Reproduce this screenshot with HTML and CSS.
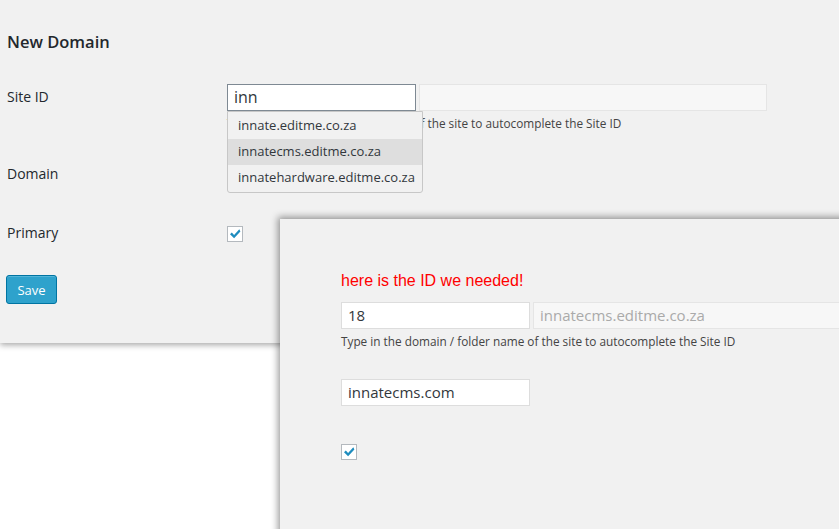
FILE: index.html
```html
<!DOCTYPE html>
<html lang="en">
<head>
    <meta charset="UTF-8">
    <meta name="viewport" content="width=device-width, initial-scale=1.0">
    <title>New Domain</title>
    <link rel="stylesheet" href="styles.css">
</head>
<body>
    <div class="window">
        <h3 class="title">New Domain</h3>
        <div class="form">
            <label class="label">Site ID</label>
            <div class="field">
                <div class="pair">
                    <div class="input focused">inn</div>
                    <div class="input disabled"></div>
                </div>
                <p class="description">Type in the domain / folder name of the site to autocomplete the Site ID</p>
                <ul class="suggest">
                    <li>innate.editme.co.za</li>
                    <li class="active">innatecms.editme.co.za</li>
                    <li>innatehardware.editme.co.za</li>
                </ul>
            </div>

            <label class="label">Domain</label>
            <div class="field short"></div>

            <label class="label">Primary</label>
            <div class="field last">
                <span class="checkbox">
                    <svg viewBox="0 0 16 16" width="16" height="16"><path d="M3 8.2l1.8-1.7 2.3 2.4 5.2-5.6 1.1 2.1-6.3 6.9z" fill="#1e8cbe"/></svg>
                </span>
            </div>
        </div>
        <button class="save">Save</button>
    </div>

    <div class="panel">
        <p class="note">here is the ID we needed!</p>
        <div class="pair">
            <div class="input">18</div>
            <div class="input disabled wide">innatecms.editme.co.za</div>
        </div>
        <p class="description">Type in the domain / folder name of the site to autocomplete the Site ID</p>
        <div class="input domain-input">innatecms.com</div>
        <span class="checkbox panel-check">
            <svg viewBox="0 0 16 16" width="16" height="16"><path d="M3 8.2l1.8-1.7 2.3 2.4 5.2-5.6 1.1 2.1-6.3 6.9z" fill="#1e8cbe"/></svg>
        </span>
    </div>
</body>
</html>
```

FILE: styles.css
```css
body {
    margin: 0;
    height: 529px;
    overflow: hidden;
    background-color: #fff;
    font-family: "Open Sans", sans-serif;
    color: #23282d;
}
.window {
    height: 343px;
    padding: 0 0 0 7px;
    box-sizing: border-box;
    background-color: #f1f1f1;
    box-shadow: 0 2px 6px rgba(0, 0, 0, 0.35);
    overflow: hidden;
}
.title {
    margin: 0;
    padding-top: 31px;
    font-size: 16.5px;
    font-weight: 600;
    line-height: 22px;
}
.form {
    display: grid;
    grid-template-columns: 220px 1fr;
    margin-top: 31px;
}
.label {
    font-size: 14px;
    line-height: 20px;
    padding-top: 3px;
}
.field {
    position: relative;
    height: 77px;
}
.field.short {
    height: 59px;
}
.field.last {
    height: 55px;
    padding-top: 6px;
    box-sizing: border-box;
}
.pair {
    display: flex;
    gap: 3px;
}
.input {
    width: 189px;
    height: 27px;
    box-sizing: border-box;
    border: 1px solid #ddd;
    background-color: #fff;
    padding: 0 6px;
    font-size: 15px;
    line-height: 25px;
    color: #32373c;
}
.focused {
    border-color: #7e8993;
    font-size: 16px;
}
.disabled {
    width: 348px;
    background-color: #f7f7f7;
    border-color: #e5e5e5;
    color: #aaa;
}
.description {
    margin: 4px 0 0;
    font-size: 11.8px;
    line-height: 17px;
    color: #444;
}
.suggest {
    position: absolute;
    left: 0;
    top: 27px;
    width: 196px;
    margin: 0;
    padding: 1px 0;
    box-sizing: border-box;
    list-style: none;
    background-color: #f1f1f1;
    border: 1px solid #c7c7c7;
    border-radius: 0 0 3px 3px;
}
.suggest li {
    height: 26px;
    padding-left: 10px;
    font-size: 13px;
    line-height: 25px;
    color: #32373c;
}
.suggest .active {
    background-color: #dedede;
}
.checkbox {
    display: block;
    width: 16px;
    height: 16px;
    box-sizing: border-box;
    border: 1px solid #b4b9be;
    background-color: #fff;
}
.checkbox svg {
    display: block;
    margin: -1px;
}
.save {
    display: block;
    margin-left: -1px;
    width: 51px;
    height: 29px;
    border: 1px solid #0074a2;
    border-radius: 3px;
    background-color: #2ea2cc;
    box-shadow: inset 0 1px 0 rgba(120, 200, 230, 0.5);
    font-family: "Open Sans", sans-serif;
    font-size: 13px;
    color: #fff;
}
.panel {
    position: absolute;
    left: 280px;
    top: 219px;
    width: 600px;
    height: 320px;
    box-sizing: border-box;
    padding-left: 61px;
    background-color: #f1f1f1;
    box-shadow: -2px -2px 7px rgba(0, 0, 0, 0.4);
}
.note {
    margin: 52px 0 0;
    height: 31px;
    font-family: "Liberation Sans", Arial, sans-serif;
    font-size: 16px;
    line-height: 19px;
    color: #ff0000;
}
.wide {
    width: 320px;
}
.domain-input {
    margin-top: 29px;
}
.panel-check {
    margin-top: 38px;
}
```
